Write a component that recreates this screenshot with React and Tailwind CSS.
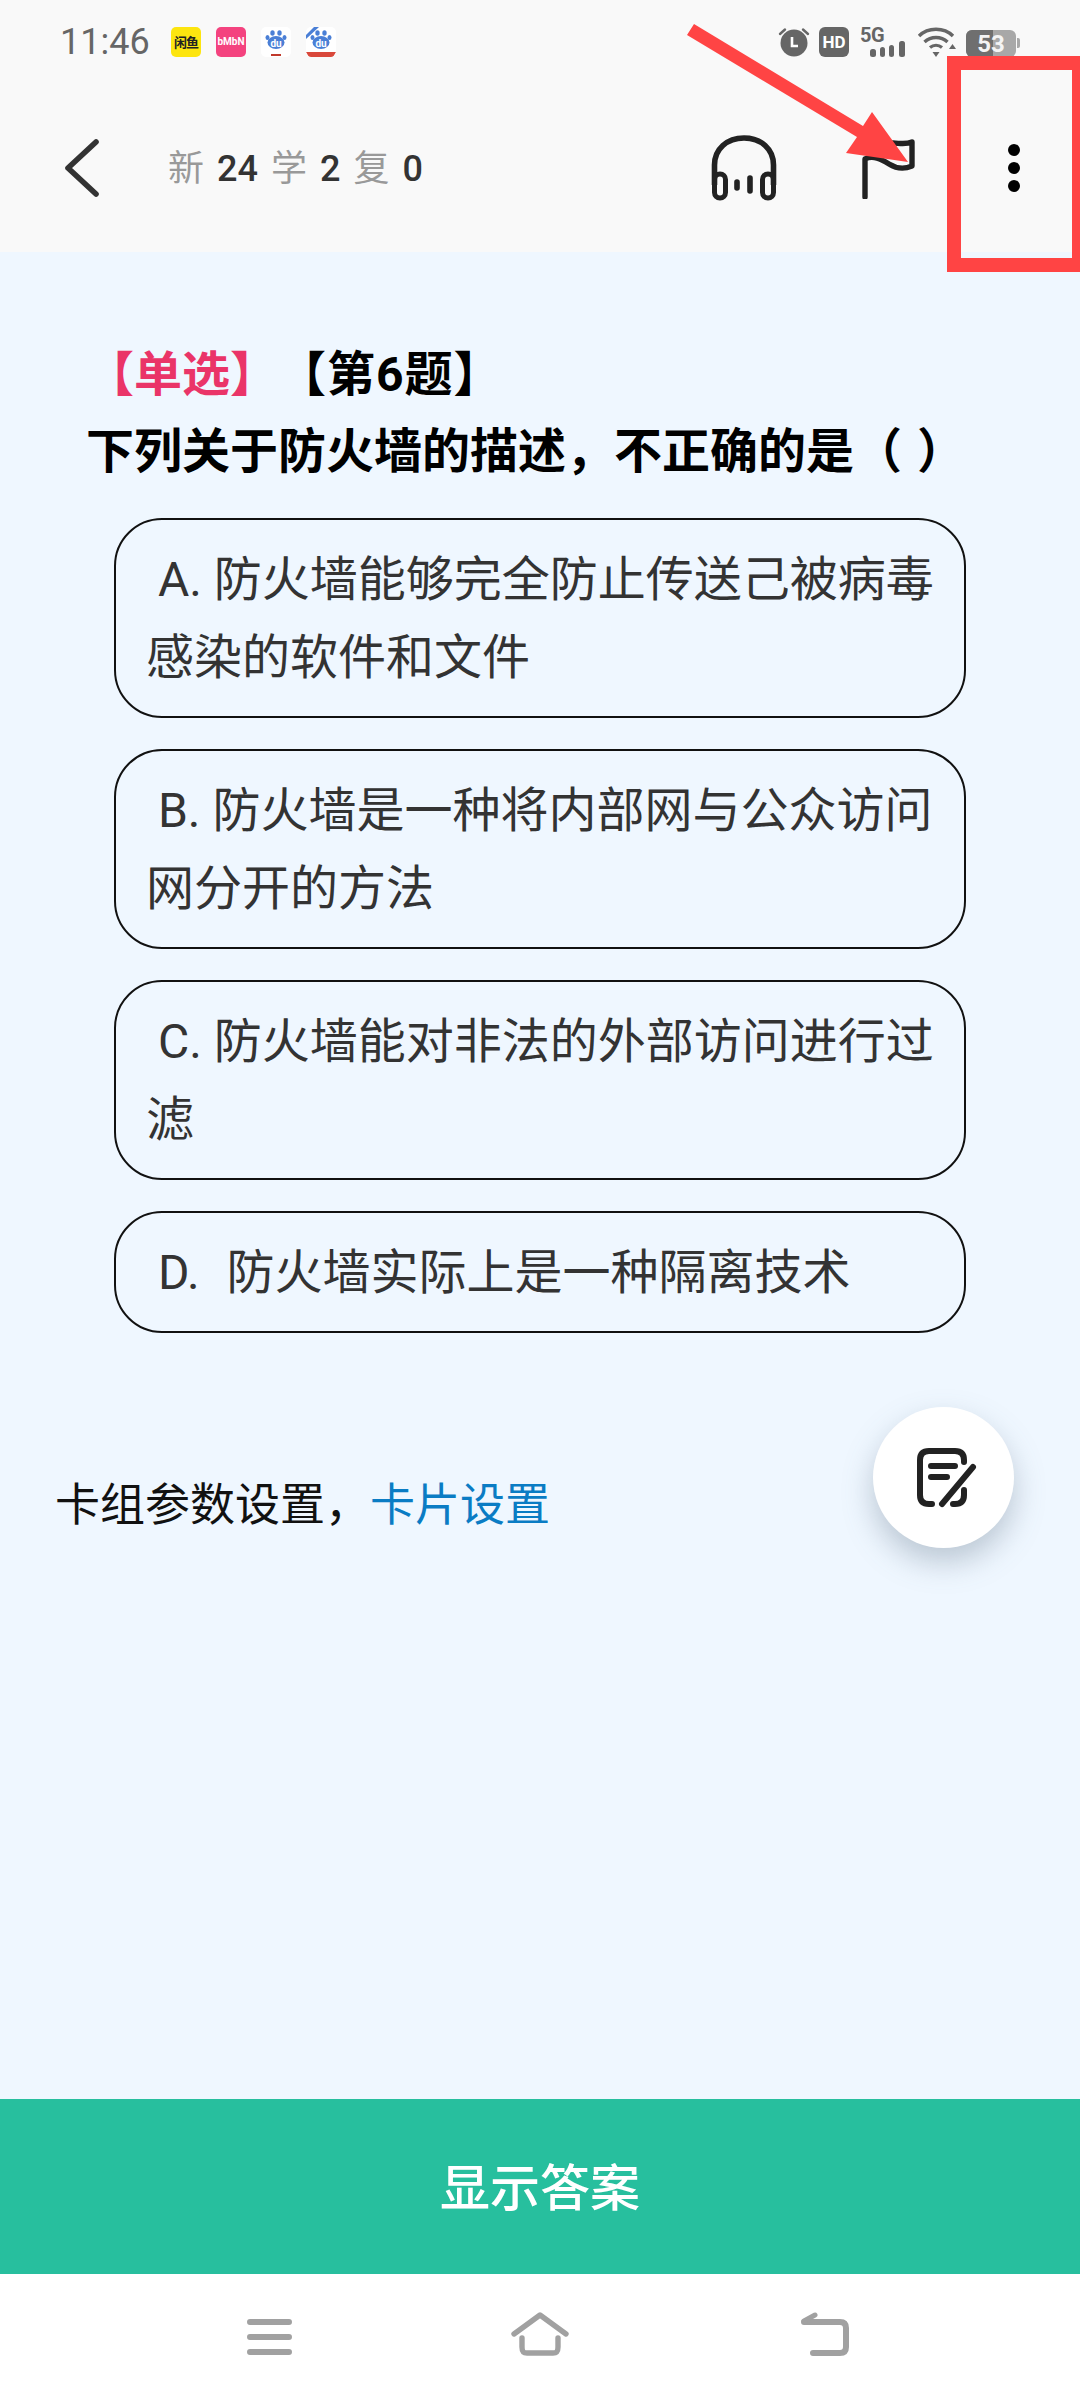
const SANS = "font-['Roboto','Noto_Sans_CJK_SC',sans-serif]";

function Paw({ badge }) {
  return (
    <svg width="30" height="30" viewBox="0 0 30 30" className="rounded-[5px] bg-white">
      <g fill="#4a7fd6">
        <ellipse cx="15" cy="15.5" rx="8.5" ry="6.5" />
        <ellipse cx="11.5" cy="6" rx="2.2" ry="2.8" />
        <ellipse cx="18.5" cy="6" rx="2.2" ry="2.8" />
        <ellipse cx="6.5" cy="10.5" rx="2" ry="2.6" />
        <ellipse cx="23.5" cy="10.5" rx="2" ry="2.6" />
      </g>
      <text x="15" y="20" textAnchor="middle" fontSize="10" fontWeight="700" fill="#fff" fontFamily="Roboto">du</text>
      {badge ? (
        <>
          <path d="M0 25H30L27 30H3Z" fill="#d9483b" />
          <path d="M0 8L8 0H13L0 12Z" fill="#4a7fd6" />
        </>
      ) : (
        <rect x="10" y="27" width="10" height="2" fill="#c0392b" />
      )}
    </svg>
  );
}

function StatusBar() {
  return (
    <div className="flex h-[84px] items-start justify-between pl-[60px] pr-[60px] pt-[27px]">
      <div className="flex items-center">
        <span className={`w-[89px] text-[36px] leading-[30px] text-[#666666] ${SANS}`}>11:46</span>
        <div className="ml-[22px] flex gap-[15px]">
          <div className={`flex h-[30px] w-[30px] items-center justify-center rounded-[5px] bg-[#fde50f] text-[13px] font-bold leading-none tracking-[-1px] text-[#222] ${SANS}`}>闲鱼</div>
          <div className={`flex h-[30px] w-[30px] items-center justify-center rounded-[5px] bg-[#f4437f] text-[10px] font-bold leading-none text-white ${SANS}`}>bMbN</div>
          <Paw />
          <Paw badge />
        </div>
      </div>
      <div className="flex items-start">
        <svg width="32" height="30" viewBox="0 0 32 30">
          <circle cx="16" cy="16" r="13.5" fill="#666" />
          <path d="M14 10V19H20" stroke="#fff" strokeWidth="2.6" fill="none" />
          <path d="M2 7L7 2.5M30 7L25 2.5" stroke="#666" strokeWidth="2.4" strokeLinecap="round" />
        </svg>
        <div className={`ml-[9px] flex h-[30px] w-[30px] items-center justify-center rounded-[6px] bg-[#666] text-[17px] font-bold leading-none text-white ${SANS}`}>HD</div>
        <div className="relative ml-[11px] h-[30px] w-[45px]">
          <svg width="45" height="30" viewBox="0 0 45 30">
            <rect x="10" y="22" width="6" height="8" rx="2.5" fill="#666" />
            <rect x="20" y="20" width="5" height="10" rx="2.5" fill="#666" />
            <rect x="29" y="18" width="5" height="12" rx="2.5" fill="#666" />
            <rect x="39" y="14" width="6" height="16" rx="2.5" fill="#666" />
          </svg>
          <span className={`absolute left-0 top-[-2px] text-[20px] font-bold leading-[20px] tracking-[-0.5px] text-[#666] ${SANS}`}>5G</span>
        </div>
        <svg width="39" height="30" viewBox="0 0 39 30" className="ml-[12px]">
          <path d="M2 9C11 0 27 0 36 9" stroke="#666" strokeWidth="3.4" fill="none" />
          <path d="M7.5 15C14 9 24 9 30.5 15" stroke="#666" strokeWidth="3.4" fill="none" />
          <path d="M13 20.5C16.5 17.5 21.5 17.5 25 20.5" stroke="#666" strokeWidth="3.2" fill="none" />
          <path d="M15.5 25L22.5 25L19 30Z" fill="#666" />
          <path d="M32 22H39L35.5 17Z" fill="#666" />
        </svg>
        <div className="relative ml-[10px] mt-[3px] flex h-[27px] w-[50px] overflow-hidden rounded-[6px] bg-[#a8a8a8]">
          <div className="h-full w-[27px] bg-[#6f6f6f]" />
          <div className={`absolute inset-0 flex items-center justify-center text-[24px] font-bold leading-none text-[#f4f4f4] ${SANS}`}>53</div>
        </div>
        <div className="ml-[1px] mt-[11px] h-[10px] w-[3px] rounded-r-[2px] bg-[#a8a8a8]" />
      </div>
    </div>
  );
}

function Stat({ label, value }) {
  return (
    <>
      <span className="text-[#999999]">{label}</span>
      <span className="font-medium text-[#333333]">{value}</span>
    </>
  );
}

function Header() {
  return (
    <div className="flex h-[168px] items-center pl-[65px] pr-[60px]">
      <svg width="34" height="58" viewBox="0 0 34 58">
        <path d="M31 3L3 29L31 55" stroke="#333" strokeWidth="5.6" strokeLinecap="round" strokeLinejoin="round" fill="none" />
      </svg>
      <div className={`ml-[69px] mt-[1px] flex items-center gap-[13px] text-[36px] leading-none ${SANS}`}>
        <Stat label="新" value="24" />
        <Stat label="学" value="2" />
        <Stat label="复" value="0" />
      </div>
      <div className="ml-auto flex items-center">
        <svg width="66" height="66" viewBox="0 0 66 66">
          <path d="M3.5 50V30C3.5 14 16 3 33 3C50 3 62.5 14 62.5 30V50" stroke="#222" strokeWidth="5.6" fill="none" />
          <rect x="3.5" y="39" width="11" height="24" rx="5.5" stroke="#222" strokeWidth="5" fill="none" />
          <rect x="51.5" y="39" width="11" height="24" rx="5.5" stroke="#222" strokeWidth="5" fill="none" />
          <path d="M26 47V53M39 43V56" stroke="#222" strokeWidth="5.6" strokeLinecap="round" />
        </svg>
        <svg width="54" height="62" viewBox="0 0 54 62" className="ml-[84px]">
          <path d="M4 60V22C12 18 20 22 28 27C36 32 44 32 51 29V5C44 8 38 6 32 6" stroke="#222" strokeWidth="5.4" strokeLinecap="round" strokeLinejoin="round" fill="none" />
        </svg>
        <svg width="12" height="48" viewBox="0 0 12 48" className="ml-[93px]">
          <circle cx="6" cy="6" r="6" fill="#000" />
          <circle cx="6" cy="24" r="6" fill="#000" />
          <circle cx="6" cy="42" r="6" fill="#000" />
        </svg>
      </div>
    </div>
  );
}

function Option({ children }) {
  return (
    <div className="whitespace-pre-wrap rounded-[48px] border-2 border-[#111111] pb-[19px] pl-[30px] pr-[20px] pt-[21px] text-[48px] leading-[78px] text-[#333333]">
      {children}
    </div>
  );
}

function Fab() {
  return (
    <div className="absolute left-[873px] top-[1407px] flex h-[141px] w-[141px] items-center justify-center rounded-full bg-white shadow-[0_14px_30px_rgba(90,110,130,0.35)]">
      <svg width="60" height="60" viewBox="0 0 60 60" className="ml-[6px]">
        <path d="M15 56H12C6 56 3 53 3 47V12C3 6 6 3 12 3H38C44 3 47 6 47 12V14M47 42V47C47 53 44 56 38 56H36" stroke="#222" strokeWidth="6" strokeLinecap="round" fill="none" />
        <path d="M14 18H38M14 29H30M25 56L56 19" stroke="#222" strokeWidth="6" strokeLinecap="round" fill="none" />
      </svg>
    </div>
  );
}

function Annotation() {
  return (
    <>
      <svg width="1080" height="280" viewBox="0 0 1080 280" className="absolute left-0 top-0">
        <polygon points="687,35 694,24 863,126 872,112 908,162 846,153 857,137" fill="#ff4444" />
      </svg>
      <div className="absolute left-[947px] top-[56px] h-[216px] w-[133px] border-y-[14px] border-l-[14px] border-r-[8px] border-[#ff4444]" />
    </>
  );
}

function NavBar() {
  return (
    <div className="flex h-[126px] items-start bg-white pl-[247px] pt-[38px]">
      <svg width="45" height="36" viewBox="0 0 45 36" className="mt-[7px]">
        <path d="M3 3H42M3 18H42M3 33H42" stroke="#a1a1a1" strokeWidth="6" strokeLinecap="round" />
      </svg>
      <svg width="58" height="44" viewBox="0 0 58 44" className="ml-[219px]">
        <path d="M3 22L29 3L55 22" stroke="#a1a1a1" strokeWidth="5.4" strokeLinecap="round" strokeLinejoin="round" fill="none" />
        <path d="M11 26V35C11 39 12 41 16 41H42C46 41 47 39 47 35V26" stroke="#a1a1a1" strokeWidth="5.4" strokeLinecap="round" fill="none" />
      </svg>
      <svg width="48" height="44" viewBox="0 0 48 44" className="ml-[232px]">
        <path d="M3 10H39C43 10 45 12 45 16V35C45 39 43 41 39 41H12" stroke="#a1a1a1" strokeWidth="6" strokeLinecap="round" fill="none" />
        <path d="M3 9L14 3" stroke="#a1a1a1" strokeWidth="5" strokeLinecap="round" />
      </svg>
    </div>
  );
}

export default function App() {
  return (
    <div className={`relative flex h-[2400px] w-[1080px] flex-col overflow-hidden bg-[#eff7ff] ${SANS}`}>
      <div className="h-[252px] bg-[#f9f9f9]">
        <StatusBar />
        <Header />
      </div>

      <div className="flex-1 pt-[84px]">
        <div className="pl-[56px] pr-[40px] text-[48px] font-bold leading-[77px] text-black">
          <div className="flex pl-[30px]">
            <span className="text-[#ea3468]">【单选】</span>
            <span className="tracking-[1px]">【第6题】</span>
          </div>
          <div className="whitespace-pre pl-[30px]">下列关于防火墙的描述，不正确的是（ <span className="ml-[3px]">）</span></div>
        </div>

        <div className="ml-[114px] mt-[28px] flex w-[852px] flex-col gap-[31px]">
          <Option> A. 防火墙能够完全防止传送己被病毒感染的软件和文件</Option>
          <Option> B. 防火墙是一种将内部网与公众访问网分开的方法</Option>
          <Option> C. 防火墙能对非法的外部访问进行过滤</Option>
          <Option> D.  <span className="ml-[3px]">防火墙实际上是一种隔离技术</span></Option>
        </div>

        <div className="ml-[55px] mt-[133px] text-[45px] leading-[80px] text-[#111111]">
          卡组参数设置，<span className="text-[#0a7cc4]">卡片设置</span>
        </div>
      </div>

      <div className="flex h-[175px] items-center justify-center bg-[#27bf9e] pt-[5px] text-[50px] font-medium text-white">
        显示答案
      </div>
      <NavBar />
      <Fab />
      <Annotation />
    </div>
  );
}
